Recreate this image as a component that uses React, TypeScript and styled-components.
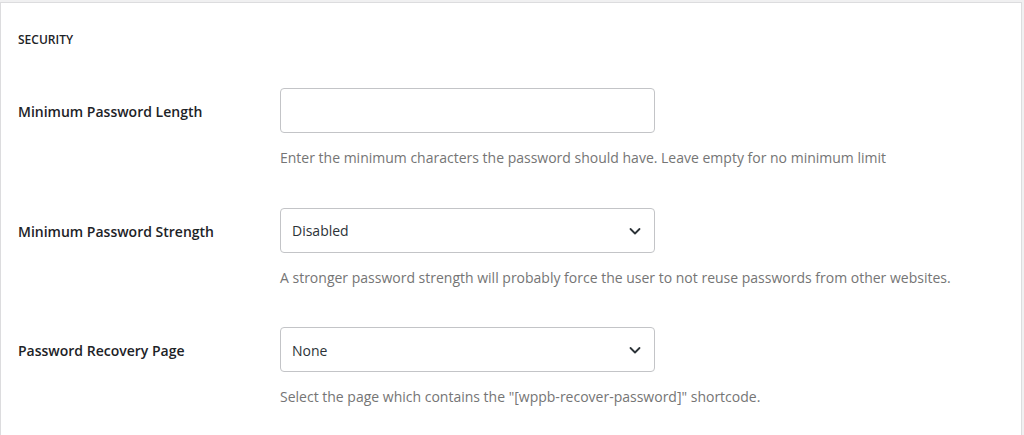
import * as React from "react";
import styled, { createGlobalStyle } from "styled-components";

const GlobalStyle = createGlobalStyle`
  html, body {
    margin: 0;
    padding: 0;
    background: #f0f0f1;
  }
  body {
    font-family: "Open Sans", "Liberation Sans", Arial, sans-serif;
    color: #1d2327;
  }
`;

type Field = {
  label: string;
  kind: "text" | "select";
  value?: string;
  help: string;
};

const fields: Field[] = [
  {
    label: "Minimum Password Length",
    kind: "text",
    help: "Enter the minimum characters the password should have. Leave empty for no minimum limit",
  },
  {
    label: "Minimum Password Strength",
    kind: "select",
    value: "Disabled",
    help: "A stronger password strength will probably force the user to not reuse passwords from other websites.",
  },
  {
    label: "Password Recovery Page",
    kind: "select",
    value: "None",
    help: 'Select the page which contains the "[wppb-recover-password]" shortcode.',
  },
];

function Chevron() {
  return (
    <svg width="14" height="14" viewBox="0 0 14 14" fill="none">
      <path
        d="M2.5 5l4.5 4.5 4.5-4.5"
        stroke="#2c3338"
        strokeWidth="1.8"
        strokeLinecap="round"
        strokeLinejoin="round"
      />
    </svg>
  );
}

export default function App() {
  return (
    <>
      <GlobalStyle />
      <Page>
        <Panel>
          <Heading>Security</Heading>
          {fields.map((f) => (
            <Row key={f.label}>
              <Label>{f.label}</Label>
              <Control>
                {f.kind === "text" ? (
                  <TextBox />
                ) : (
                  <SelectBox>
                    <span>{f.value}</span>
                    <Chevron />
                  </SelectBox>
                )}
              </Control>
              <Help>{f.help}</Help>
            </Row>
          ))}
        </Panel>
      </Page>
    </>
  );
}

const Page = styled.div`
  padding-top: 2px;
  width: 1022px;
  height: 433px;
  overflow: hidden;
`;

const Panel = styled.div`
  background: #fff;
  border: 1px solid #dcdcde;
  border-bottom: none;
  height: 100%;
  box-sizing: border-box;
`;

const Heading = styled.h3`
  margin: 0 0 40px;
  padding: 29px 17px 0;
  font-size: 12px;
  line-height: 16px;
  font-weight: 600;
  text-transform: uppercase;
  color: #1d2327;
`;

const Row = styled.div`
  display: grid;
  grid-template-columns: 262px 375px;
  grid-template-rows: 45px auto;
  row-gap: 15px;
  padding: 0 0 39.5px 17px;
`;

const Label = styled.div`
  display: flex;
  align-items: center;
  padding-top: 2px;
  font-size: 14px;
  font-weight: 600;
  color: #1d2327;
  white-space: nowrap;
`;

const Control = styled.div`
  display: flex;
`;

const TextBox = styled.div`
  flex: 1;
  border: 1px solid #c3c4c7;
  border-radius: 4px;
  background: #fff;
`;

const SelectBox = styled.div`
  flex: 1;
  display: flex;
  align-items: center;
  justify-content: space-between;
  padding: 1px 12px 0 11px;
  border: 1px solid #c3c4c7;
  border-radius: 4px;
  background: #fff;
  font-size: 14px;
  color: #2c3338;
`;

const Help = styled.div`
  grid-column: 2;
  white-space: nowrap;
  font-size: 14px;
  line-height: 20px;
  color: #757575;
`;
